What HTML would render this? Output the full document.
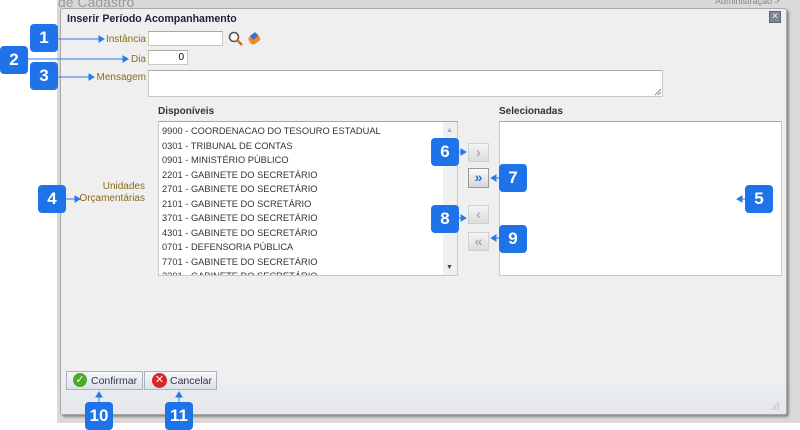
<!DOCTYPE html>
<html><head><meta charset="utf-8"><style>
*{margin:0;padding:0;box-sizing:border-box}
body{width:800px;height:430px;overflow:hidden;background:#fff;position:relative;font-family:"Liberation Sans","DejaVu Sans",sans-serif;font-size:10px}
.abs{position:absolute}
#bg{left:57px;top:0;width:743px;height:423px;background:#d9d9d9}
#dlg{left:60px;top:8px;width:727px;height:407px;background:#efefef;border:1px solid #a8a8a8;border-radius:3px;box-shadow:2px 2px 2px #888}
.lbl{color:#8a6a1c;font-size:10px;text-align:right}
.inp{background:#fff;border:1px solid #c8c8c8;border-top-color:#a8a8a8}
.badge{width:28px;height:28px;background:#1f73e8;border-radius:4px;color:#fff;font-weight:bold;font-size:17px;text-align:center;line-height:28px}
.item{height:14.5px;line-height:14.5px;padding-left:3px;color:#333;font-size:9.3px;white-space:nowrap}
.ab{left:468px;width:21px;height:19px;background:linear-gradient(#f4f4f4,#dcdcdc);border:1px solid #d0d0d0;text-align:center;line-height:16px;font-size:14px;font-weight:bold;color:#aaa}
.btn{top:371px;height:19px;background:linear-gradient(#f5f7fa,#dde2ea);border:1px solid #a9b2bf;color:#334;font-size:10.5px;line-height:18px}
</style></head><body>
<div class="abs" id="bg"></div>
<div class="abs" style="left:58px;top:-6px;color:#999;font-size:14px">de Cadastro</div>
<div class="abs" style="left:715px;top:-4px;color:#888;font-size:9px">Administração &gt;</div>
<div class="abs" id="dlg"></div>
<div class="abs" style="left:61px;top:383px;width:725px;height:31px;background:linear-gradient(#eaedf3,#e6e7ea)"></div>
<div class="abs" style="left:67px;top:13px;font-weight:bold;font-size:10.6px;color:#1d2438">Inserir Período Acompanhamento</div>
<div class="abs" style="left:769px;top:11px;width:12px;height:12px;background:#7e8794;border:1px solid #5d6570;color:#fff;font-size:10px;line-height:10px;text-align:center">×</div>

<div class="abs lbl" style="left:60px;top:34px;width:86px">Instância</div>
<div class="abs inp" style="left:148px;top:31px;width:75px;height:15px"></div>
<svg class="abs" style="left:228px;top:31px" width="16" height="16"><circle cx="6" cy="6" r="4.5" fill="#fff" stroke="#555" stroke-width="1.6"/><line x1="9" y1="9" x2="14" y2="14" stroke="#d36a1c" stroke-width="2.5"/></svg>
<svg class="abs" style="left:247px;top:31px" width="16" height="16"><rect x="2" y="3" width="11" height="9" rx="3" transform="rotate(-35 8 8)" fill="#f08a20"/><path d="M3 5 L8 1 L11 5 L6 9 Z" fill="#3b6fc9"/></svg>
<div class="abs lbl" style="left:60px;top:54px;width:86px">Dia</div>
<div class="abs inp" style="left:148px;top:50px;width:40px;height:15px;text-align:right;padding-right:3px;line-height:13px;font-size:10px">0</div>
<div class="abs lbl" style="left:60px;top:72px;width:86px">Mensagem</div>
<div class="abs inp" style="left:148px;top:70px;width:515px;height:27px"></div>
<svg class="abs" style="left:654px;top:88px" width="8" height="8"><path d="M1 7L7 1M4 7L7 4" stroke="#888"/></svg>

<div class="abs" style="left:158px;top:106px;font-weight:bold;font-size:10px;color:#333">Disponíveis</div>
<div class="abs" style="left:499px;top:106px;font-weight:bold;font-size:10px;color:#333">Selecionadas</div>
<div class="abs lbl" style="left:60px;top:181px;width:85px;line-height:12px">Unidades<br>Orçamentárias</div>

<div class="abs inp" style="left:158px;top:121px;width:300px;height:155px;overflow:hidden;padding-top:2px">
<div class="item">9900 - COORDENACAO DO TESOURO ESTADUAL</div>
<div class="item">0301 - TRIBUNAL DE CONTAS</div>
<div class="item">0901 - MINISTÉRIO PÚBLICO</div>
<div class="item">2201 - GABINETE DO SECRETÁRIO</div>
<div class="item">2701 - GABINETE DO SECRETÁRIO</div>
<div class="item">2101 - GABINETE DO SCRETÁRIO</div>
<div class="item">3701 - GABINETE DO SECRETÁRIO</div>
<div class="item">4301 - GABINETE DO SECRETÁRIO</div>
<div class="item">0701 - DEFENSORIA PÚBLICA</div>
<div class="item">7701 - GABINETE DO SECRETÁRIO</div>
<div class="item">2301 - GABINETE DO SECRETÁRIO</div>
</div>
<div class="abs" style="left:443px;top:122px;width:14px;height:153px;background:#f0f0f0"></div>
<div class="abs" style="left:446px;top:127px;font-size:7px;color:#aaa">▲</div>
<div class="abs" style="left:446px;top:264px;font-size:7px;color:#444">▼</div>
<div class="abs inp" style="left:499px;top:121px;width:283px;height:155px"></div>

<div class="abs ab" style="top:143px">›</div>
<div class="abs ab" style="top:168px;height:20px;border-color:#999;color:#1e73d6;background:linear-gradient(#fafafa,#d6d6d6)">»</div>
<div class="abs ab" style="top:205px">‹</div>
<div class="abs ab" style="top:232px">«</div>

<div class="abs btn" style="left:66px;width:77px;padding-left:24px">Confirmar</div>
<div class="abs" style="left:73px;top:373px;width:14px;height:14px;border-radius:50%;background:#4caa2a;color:#fff;font-size:11px;line-height:14px;text-align:center">✓</div>
<div class="abs btn" style="left:144px;width:73px;padding-left:25px">Cancelar</div>
<div class="abs" style="left:152px;top:373px;width:15px;height:15px;border-radius:50%;background:#d8252a;color:#fff;font-size:11px;font-weight:bold;line-height:15px;text-align:center">✕</div>
<svg class="abs" style="left:770px;top:401px" width="10" height="10"><path d="M2 9V7M5 9V4M8 9V1" stroke="#bbb"/></svg>

<svg class="abs" style="left:0;top:0" width="800" height="430">
<g stroke="#2a7be8" stroke-width="1" fill="#2a7be8">
<line x1="57" y1="39" x2="100" y2="39"/><path d="M104 39l-5-3v6z"/>
<line x1="27" y1="59" x2="124" y2="59"/><path d="M128 59l-5-3v6z"/>
<line x1="57" y1="77" x2="90" y2="77"/><path d="M94 77l-5-3v6z"/>
<line x1="66" y1="199" x2="76" y2="199"/><path d="M80 199l-5-3v6z"/>
<line x1="745" y1="199" x2="741" y2="199"/><path d="M737 199l5-3v6z"/>
<line x1="458" y1="152" x2="462" y2="152"/><path d="M466 152l-5-3v6z"/>
<line x1="499" y1="178" x2="495" y2="178"/><path d="M491 178l5-3v6z"/>
<line x1="458" y1="218" x2="462" y2="218"/><path d="M466 218l-5-3v6z"/>
<line x1="499" y1="238" x2="495" y2="238"/><path d="M491 238l5-3v6z"/>
<line x1="99" y1="402" x2="99" y2="396"/><path d="M99 392l-3 5h6z"/>
<line x1="179" y1="402" x2="179" y2="396"/><path d="M179 392l-3 5h6z"/>
</g></svg>

<div class="abs badge" style="left:30px;top:24px">1</div>
<div class="abs badge" style="left:0px;top:46px">2</div>
<div class="abs badge" style="left:30px;top:62px">3</div>
<div class="abs badge" style="left:38px;top:185px">4</div>
<div class="abs badge" style="left:745px;top:185px">5</div>
<div class="abs badge" style="left:431px;top:138px">6</div>
<div class="abs badge" style="left:499px;top:164px">7</div>
<div class="abs badge" style="left:431px;top:205px">8</div>
<div class="abs badge" style="left:499px;top:225px">9</div>
<div class="abs badge" style="left:85px;top:402px">10</div>
<div class="abs badge" style="left:165px;top:402px">11</div>
</body></html>
